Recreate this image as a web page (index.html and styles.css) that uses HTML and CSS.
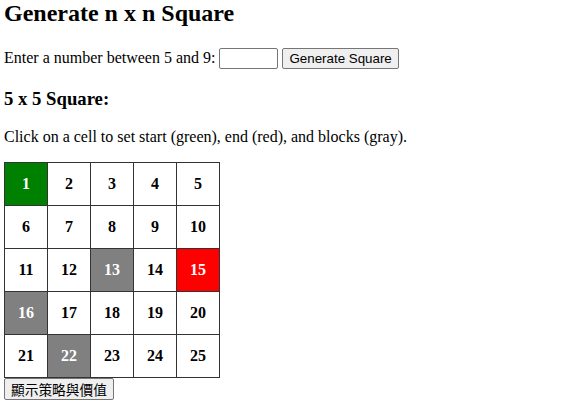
FILE: index.html
```html
<!DOCTYPE html>
<html>
<head>
<meta charset="utf-8">
<title>Generate n x n Square</title>
<link rel="stylesheet" href="styles.css">
</head>
<body>
<h1 class="title">Generate n x n Square</h1>
<p class="controls">Enter a number between 5 and 9: <input class="num-input" type="number"> <button class="btn">Generate Square</button></p>
<h3 class="subtitle">5 x 5 Square:</h3>
<p class="hint">Click on a cell to set start (green), end (red), and blocks (gray).</p>
<table class="grid">
  <tr><td class="start">1</td><td>2</td><td>3</td><td>4</td><td>5</td></tr>
  <tr><td>6</td><td>7</td><td>8</td><td>9</td><td>10</td></tr>
  <tr><td>11</td><td>12</td><td class="block">13</td><td>14</td><td class="end">15</td></tr>
  <tr><td class="block">16</td><td>17</td><td>18</td><td>19</td><td>20</td></tr>
  <tr><td>21</td><td class="block">22</td><td>23</td><td>24</td><td>25</td></tr>
</table>
<button class="btn btn-cjk">顯示策略與價值</button>
</body>
</html>
```
FILE: styles.css
```css
body {
  margin: 0 4px;
  font-family: "Liberation Serif", "Times New Roman", serif;
  font-size: 16px;
  color: #000;
  background: #fff;
}
.title {
  font-size: 24px;
  font-weight: bold;
  margin: 0 0 21px;
}
.controls {
  margin: 21px 0 16px;
}
.num-input {
  width: 59px;
  height: 21px;
  box-sizing: border-box;
  border: 1px solid #767676;
  border-radius: 2px;
  padding: 1px 2px;
  font-size: 13.333px;
  vertical-align: baseline;
}
.btn {
  font-family: "Liberation Sans", Arial, sans-serif;
  font-size: 13.333px;
  padding: 1px 6px;
  border: 1px solid #767676;
  border-radius: 2px;
  background: #efefef;
  color: #000;
  height: 21px;
}
.btn-cjk {
  font-family: "Liberation Sans", "Noto Sans CJK TC", sans-serif;
  font-size: 13.7px;
  display: block;
  height: 22px;
  padding: 0 6px;
}
.subtitle {
  font-size: 18.72px;
  font-weight: bold;
  margin: 18.72px 0;
}
.hint {
  margin: 16px 0 16px;
}
.grid {
  border-collapse: collapse;
}
.grid td {
  width: 42px;
  height: 42px;
  padding: 0;
  border: 1px solid #333;
  text-align: center;
  vertical-align: middle;
  font-weight: bold;
}
.grid td.start {
  background: #008000;
  color: #fff;
}
.grid td.end {
  background: #ff0000;
  color: #fff;
}
.grid td.block {
  background: #808080;
  color: #fff;
}
```
